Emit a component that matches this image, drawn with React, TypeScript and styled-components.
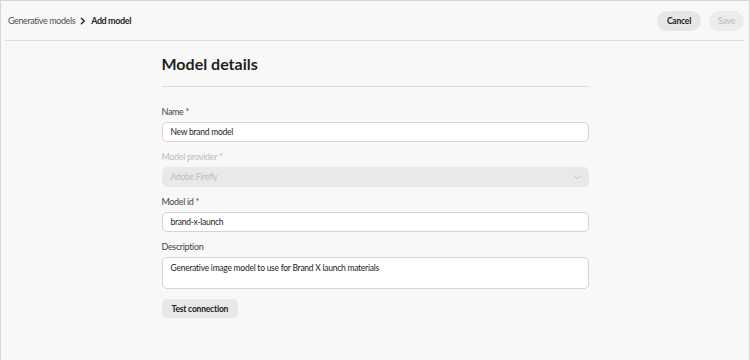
import styled, { createGlobalStyle } from 'styled-components';

const GlobalStyle = createGlobalStyle`
  html, body {
    margin: 0;
    padding: 0;
    background: #ffffff;
  }
  body {
    font-family: Lato, 'Liberation Sans', sans-serif;
    color: #222222;
  }
  * {
    box-sizing: border-box;
  }
`;

const Frame = styled.div`
  width: 750px;
  height: 361px;
  background: #f8f8f8;
  border: 1px solid #d6d6d6;
  overflow: hidden;
`;

const Header = styled.header`
  height: 40px;
  margin: 0 5px 0 4px;
  padding-left: 3px;
  display: flex;
  align-items: center;
  justify-content: space-between;
  border-bottom: 1px solid #dcdcdc;
`;

const Crumbs = styled.nav`
  display: flex;
  align-items: center;
  gap: 4px;
  font-size: 9px;
  letter-spacing: -0.4px;
`;

const Crumb = styled.span<{ $current?: boolean }>`
  color: ${(p) => (p.$current ? '#1f1f1f' : '#505050')};
  font-weight: ${(p) => (p.$current ? 700 : 400)};
`;

const Actions = styled.div`
  display: flex;
  gap: 8px;
`;

const PillButton = styled.button<{ $disabled?: boolean }>`
  height: 20px;
  padding: 0 ${(p) => (p.$disabled ? '9px' : '10px')};
  border: none;
  border-radius: 10px;
  font-family: inherit;
  font-size: 8.5px;
  letter-spacing: -0.2px;
  font-weight: 700;
  background: ${(p) => (p.$disabled ? '#ececec' : '#e6e6e6')};
  color: ${(p) => (p.$disabled ? '#c3c3c3' : '#222222')};
`;

const Main = styled.main`
  width: 427px;
  margin: 0 auto;
  padding-top: 12px;
`;

const Title = styled.h1`
  margin: 0;
  font-size: 16px;
  font-weight: 700;
  line-height: 22px;
  color: #1f1f1f;
  padding-bottom: 11px;
  border-bottom: 1px solid #dcdcdc;
`;

const Form = styled.form`
  display: flex;
  flex-direction: column;
  padding-top: 18px;
`;

const Field = styled.div`
  display: flex;
  flex-direction: column;
  margin-bottom: 8px;
`;

const Label = styled.label<{ $disabled?: boolean }>`
  font-size: 9px;
  letter-spacing: -0.35px;
  line-height: 14px;
  margin-bottom: 3px;
  color: ${(p) => (p.$disabled ? '#bdbdbd' : '#464646')};
`;

const Input = styled.div`
  height: 20px;
  padding: 0 8px;
  display: flex;
  align-items: center;
  background: #ffffff;
  border: 1px solid #d3d3d3;
  border-radius: 5px;
  font-size: 8.5px;
  letter-spacing: -0.25px;
  color: #222222;
`;

const Select = styled(Input)`
  background: #e9e9e9;
  border-color: #e9e9e9;
  color: #bdbdbd;
  justify-content: space-between;
  padding-right: 6px;
`;

const TextArea = styled(Input)`
  height: 32px;
  align-items: flex-start;
  padding-top: 5px;
`;

const TestButton = styled.button`
  align-self: flex-start;
  margin-top: 2px;
  height: 19px;
  padding: 0 10px;
  border: none;
  border-radius: 5px;
  background: #e8e8e8;
  font-family: inherit;
  font-size: 8.5px;
  letter-spacing: -0.2px;
  font-weight: 700;
  color: #222222;
`;

function Chevron() {
  return (
    <svg width="8" height="8" viewBox="0 0 10 10" fill="none">
      <path d="M3 1.5 L6.5 5 L3 8.5" stroke="#222" strokeWidth="1.8" strokeLinecap="round" strokeLinejoin="round" />
    </svg>
  );
}

function ChevronDown() {
  return (
    <svg width="9" height="9" viewBox="0 0 10 10" fill="none">
      <path d="M2 3.5 L5 6.5 L8 3.5" stroke="#bcbcbc" strokeWidth="1" strokeLinecap="round" strokeLinejoin="round" />
    </svg>
  );
}

function App() {
  return (
    <>
      <GlobalStyle />
      <Frame>
        <Header>
          <Crumbs>
            <Crumb>Generative models</Crumb>
            <Chevron />
            <Crumb $current>Add model</Crumb>
          </Crumbs>
          <Actions>
            <PillButton>Cancel</PillButton>
            <PillButton $disabled>Save</PillButton>
          </Actions>
        </Header>
        <Main>
          <Title>Model details</Title>
          <Form>
            <Field>
              <Label>Name *</Label>
              <Input>New brand model</Input>
            </Field>
            <Field>
              <Label $disabled>Model provider *</Label>
              <Select>
                Adobe Firefly
                <ChevronDown />
              </Select>
            </Field>
            <Field>
              <Label>Model id *</Label>
              <Input>brand-x-launch</Input>
            </Field>
            <Field>
              <Label>Description</Label>
              <TextArea>Generative image model to use for Brand X launch materials</TextArea>
            </Field>
            <TestButton type="button">Test connection</TestButton>
          </Form>
        </Main>
      </Frame>
    </>
  );
}

export default App;
